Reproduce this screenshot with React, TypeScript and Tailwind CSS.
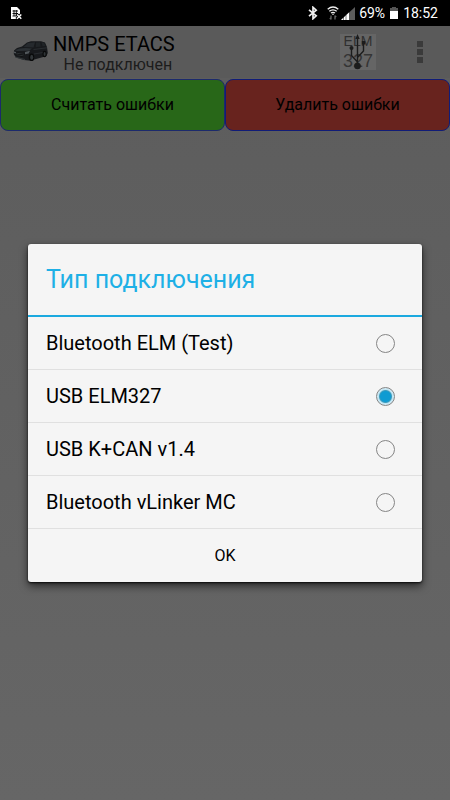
import React, { useState } from 'react';
import { clsx } from 'clsx';

const CONNECTIONS = [
  { id: 'bt-elm', label: 'Bluetooth ELM (Test)' },
  { id: 'usb-elm327', label: 'USB ELM327' },
  { id: 'usb-kcan', label: 'USB K+CAN v1.4' },
  { id: 'bt-vlinker', label: 'Bluetooth vLinker MC' },
];

const SimErrorIcon = () => (
  <svg className="w-3 h-3.5" viewBox="0 0 12 14">
    <path d="M1 1h6l3 3v5l-3 4H1z" fill="#fff" />
    <path d="M2.5 5h5.5M2.5 7.5h5.5M2.5 10h4M4 4v6M6.3 4v6" stroke="#000" strokeWidth="0.9" fill="none" />
    <path d="M6.5 8l5 5M11.5 8l-5 5" stroke="#000" strokeWidth="3" />
    <path d="M7 8.5l4.3 4.3M11.3 8.5L7 12.8" stroke="#fff" strokeWidth="1.4" />
  </svg>
);

const BluetoothIcon = () => (
  <svg className="w-3 h-3.5" viewBox="0 0 12 14" fill="none" stroke="#f0f0f0" strokeWidth="1.7">
    <path d="M2 3.8l7.2 6L6 12.7V1.3l3.2 2.9L2 10.2" />
  </svg>
);

const WifiIcon = () => (
  <svg className="w-3 h-3.5" viewBox="0 0 12 14" fill="none" stroke="#eee" strokeWidth="1.3">
    <path d="M.7 3.3Q6-1.300 11.3 3.300M2.300 5.300q3.700-3 7.400 0M4 7.100q2-1.500 4 0" />
    <circle cx="6" cy="8.3" r="0.8" fill="#eee" stroke="none" />
    <path d="M4 9.5v4M2.8 12L4 13.3M8 13.5v-4M9.2 11L8 9.7" stroke="#666" />
  </svg>
);

const SignalIcon = () => (
  <svg className="w-3.5 h-3.5" viewBox="0 0 14 14">
    <path d="M0 14L14 1v13z" fill="#5c5c5c" />
    <path d="M0 14L8 6.5V14z" fill="#fff" />
    <path d="M2.5 11v3M5 9v5" stroke="#000" strokeWidth="0.5" />
  </svg>
);

const BatteryIcon = () => (
  <svg className="w-2.5 h-3.5" viewBox="0 0 10 14">
    <path d="M3 1h4v1h2v3H1V2h2z" fill="#555" />
    <path d="M1 5h8v8H1z" fill="#fff" />
  </svg>
);

const CarIcon = () => (
  <svg className="w-9 h-6 shrink-0" viewBox="0 0 36 24">
    <path d="M1 10.500L4 8l5-1.500L14 2.500 18 1.200h10l4 1.300 2 4.500.8 6-1.300 3-3.200 1-9 2.500-1.500 1.500-9-1-8-2.500L.8 14z" fill="#17191c" />
    <path d="M10.500 7L15 3l7-.7-1.500 5.200z" fill="#25292d" />
    <path d="M23 2.500l4-.3.700 4.300-5 .8zM28.500 2.300l2.500.5 1.500 3.200-3 .3z" fill="#202427" />
    <path d="M2 10.300Q8 7 19 8.600l-3 2.200-12 .2z" fill="#2b3034" />
    <path d="M2.300 12.500l9 1-.7 3.300-7.600-1.600z" fill="#060708" />
    <path d="M3 13.200l8 1M3.300 14.700l7.500 1.200" stroke="#454b4f" strokeWidth="0.6" />
    <path d="M1 11.500l2 .5v1.500l-2-.4zM12 12l5-1.200-1.300 2.600-3.700.8z" fill="#50565a" />
    <path d="M20.500 9.500L34 7.800M21 14l9-1.500" stroke="#303539" strokeWidth="0.7" />
    <path d="M2 17l10 2.500" stroke="#3a4043" strokeWidth="0.8" />
    <ellipse cx="18.500" cy="17.200" rx="2.700" ry="3.800" fill="#080909" />
    <ellipse cx="18.700" cy="17.200" rx="1.500" ry="2.500" fill="#303538" />
    <ellipse cx="31.500" cy="14" rx="2" ry="3.300" fill="#080909" />
    <ellipse cx="31.600" cy="14" rx="1" ry="2.100" fill="#303538" />
  </svg>
);

// Adapter button: caption lies under the USB trident
const AdapterIcon = () => (
  <svg className="w-9 h-9 font-['Liberation_Sans',sans-serif]" viewBox="0 0 36 36" aria-hidden="true">
    <rect width="36" height="36" fill="#656565" />
    <text x="18" y="12" textAnchor="middle" fontSize="14" fill="#303030">ELM</text>
    <text x="18" y="33" textAnchor="middle" fontSize="18" fill="#353535">327</text>
    <path d="M17.500 32V3M17.500 28l-6-6.500V14M17.500 23.500l6-6.500V9" stroke="#1c1c1c" strokeWidth="1.400" fill="none" />
    <path d="M17.500 0l-2.200 5h4.400z" fill="#1c1c1c" />
    <circle cx="11.500" cy="14" r="2" fill="#1c1c1c" />
    <path d="M21.800 7h3.400v3.500h-3.400z" fill="#1c1c1c" />
    <circle cx="17.500" cy="32" r="3.300" fill="#1c1c1c" />
  </svg>
);

const StatusBar = () => (
  <header className="flex h-[26px] shrink-0 items-center justify-between bg-black pl-2.5 pr-3 text-sm text-white">
    <SimErrorIcon />
    <div className="flex items-center gap-1">
      <BluetoothIcon />
      <div className="flex items-center gap-0.5 pl-1">
        <WifiIcon />
        <SignalIcon />
      </div>
      <span>69%</span>
      <BatteryIcon />
      <span>18:52</span>
    </div>
  </header>
);

const ActionBar = () => (
  <div className="flex h-[52px] shrink-0 items-center justify-between bg-[#5a5a5a] pl-[13px] pr-[22px]">
    <div className="flex items-center gap-1">
      <CarIcon />
      <div className="flex flex-col items-center pt-1 text-black">
        <h1 className="text-xl leading-[22px]">NMPS ETACS</h1>
        <p className="pl-2 text-base leading-5 text-[#1c1c1c]">Не подключен</p>
      </div>
    </div>
    <div className="flex items-center gap-9">
      <button type="button" aria-label="ELM 327">
        <AdapterIcon />
      </button>
      <button type="button" aria-label="Меню" className="flex w-4 flex-col items-center gap-0.5">
        <span className="size-1.5 bg-[#3a3a3a]" />
        <span className="size-1.5 bg-[#3a3a3a]" />
        <span className="size-1.5 bg-[#3a3a3a]" />
      </button>
    </div>
  </div>
);

interface ConnectionDialogProps {
  selected: string;
  onSelect: (id: string) => void;
  onClose: () => void;
}

const ConnectionDialog: React.FC<ConnectionDialogProps> = ({ selected, onSelect, onClose }) => (
  <div className="absolute inset-x-0 bottom-0 top-[26px] flex items-center px-7">
    <div
      role="dialog"
      aria-labelledby="dialog-title"
      className="w-full rounded-[3px] bg-[#f5f5f5] text-black shadow-[0_4px_8px_0_rgba(0,0,0,0.6),0_1px_2px_0_rgba(0,0,0,0.8)]"
    >
      <h2
        id="dialog-title"
        className="flex h-[73px] items-center border-b-2 border-[#1ba9df] px-[18px] text-[25px] text-[#1eb0e6]"
      >
        Тип подключения
      </h2>
      {CONNECTIONS.map(({ id, label }) => (
        <label
          key={id}
          className="flex h-[53px] items-center justify-between border-b border-[#e0e0e0] pl-[18px] pr-[27px] text-xl"
        >
          {label}
          <input
            type="radio"
            name="connection"
            checked={selected === id}
            onChange={() => onSelect(id)}
            className={clsx(
              'size-[19px] appearance-none rounded-full border border-[#858585]',
              selected === id &&
                'bg-[radial-gradient(circle,#0f9bd2_0_5px,#3f9dbd_6px,#c0e4f3_7px,#d9f0f9_9px)]'
            )}
          />
        </label>
      ))}
      <button type="button" onClick={onClose} className="h-[53px] w-full text-base">
        OK
      </button>
    </div>
  </div>
);

export default function App() {
  const [selected, setSelected] = useState('usb-elm327');
  const [open, setOpen] = useState(true);

  return (
    <div className="relative flex min-h-screen flex-col bg-linear-to-b from-[#5c5c5c] to-[#666666] font-[Roboto,sans-serif]">
      <StatusBar />
      <ActionBar />
      {/* Error actions */}
      <div className="grid grid-cols-2 pt-px text-base text-black">
        <button type="button" className="h-[52px] rounded-lg border border-[#1c2a6c] bg-[#286718]">
          Считать ошибки
        </button>
        <button type="button" className="h-[52px] rounded-lg border border-[#101c78] bg-[#68231e]">
          Удалить ошибки
        </button>
      </div>
      {open && (
        <ConnectionDialog selected={selected} onSelect={setSelected} onClose={() => setOpen(false)} />
      )}
    </div>
  );
}
